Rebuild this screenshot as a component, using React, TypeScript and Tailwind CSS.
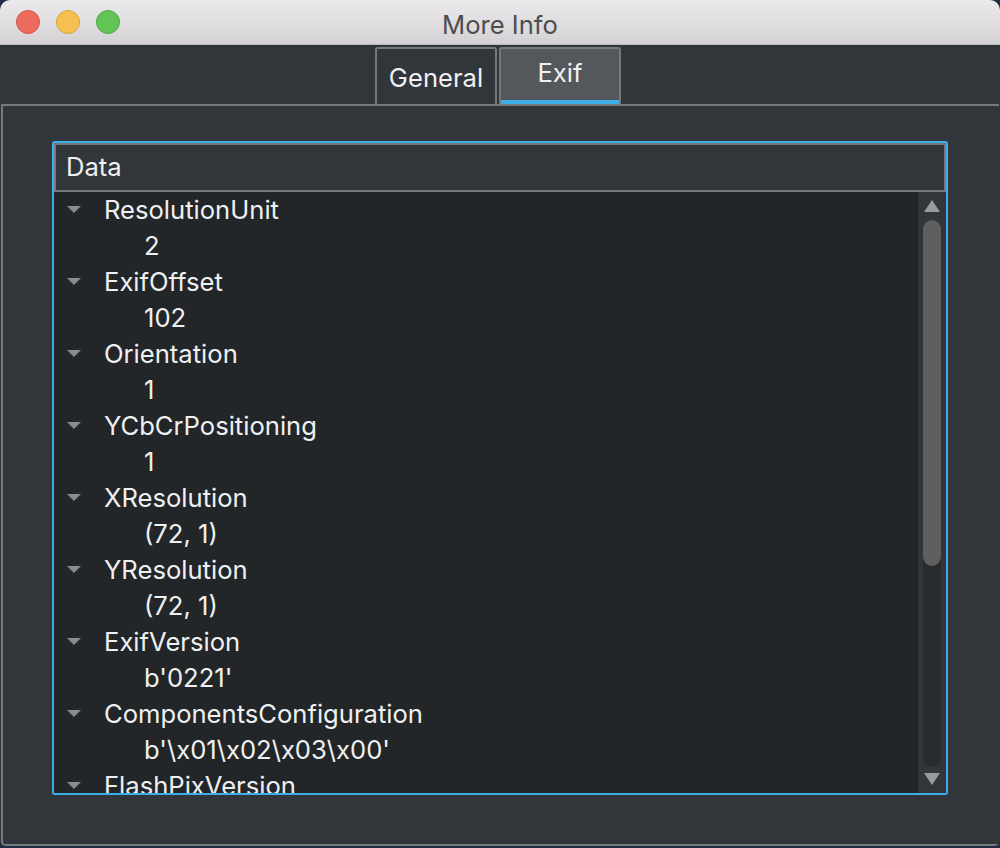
const rows: [string, string][] = [
  ['ResolutionUnit', '2'],
  ['ExifOffset', '102'],
  ['Orientation', '1'],
  ['YCbCrPositioning', '1'],
  ['XResolution', '(72, 1)'],
  ['YResolution', '(72, 1)'],
  ['ExifVersion', "b'0221'"],
  ['ComponentsConfiguration', "b'\\x01\\x02\\x03\\x00'"],
  ['FlashPixVersion', "b'0100'"],
];

function Arrow() {
  return (
    <svg width="14" height="8" viewBox="0 0 14 8" className="shrink-0">
      <polygon points="0,0 14,0 7,7" fill="#8a8c8e" />
    </svg>
  );
}

export default function App() {
  return (
    <div
      className="w-[1000px] h-[848px] bg-[#1e2c44] overflow-hidden"
      style={{ fontFamily: 'Inter, "Liberation Sans", sans-serif' }}
    >
      <div className="w-full h-[846px] bg-[#31363b] rounded-t-[10px] flex flex-col overflow-hidden rounded-b-[6px]">
        {/* title bar */}
        <div className="h-[45px] shrink-0 bg-gradient-to-b from-[#ebe9eb] to-[#d4d2d4] border-b border-[#b9b7b9] flex items-center relative">
          <div className="flex items-center gap-[16px] pl-[16px]">
            <span className="w-[24px] h-[24px] rounded-full bg-[#ed6a5e] border border-[#d6544a]" />
            <span className="w-[24px] h-[24px] rounded-full bg-[#f5c04f] border border-[#d9a33a]" />
            <span className="w-[24px] h-[24px] rounded-full bg-[#61c454] border border-[#4ea943]" />
          </div>
          <div className="absolute inset-0 flex items-center justify-center pt-[6px] text-[25.6px] text-[#4d4d4d]">
            More Info
          </div>
        </div>

        {/* tabs */}
        <div className="h-[59px] shrink-0 flex justify-center items-end pt-[2px] pr-[4px]">
          <div className="flex gap-[2px] h-[57px]">
            <div className="w-[122px] h-full border-2 border-b-0 border-[#76797c] rounded-t-[3px] bg-[#31363b] flex items-center justify-center pt-[4px] text-[25.6px] text-[#eff0f1]">
              General
            </div>
            <div className="w-[122px] h-full border-2 border-b-0 border-[#76797c] rounded-t-[3px] bg-[#54575b] flex flex-col">
              <div className="flex-1 flex items-center justify-center text-[25.6px] text-[#eff0f1] pb-[2px]">Exif</div>
              <div className="h-[4px] bg-[#3daee9]" />
            </div>
          </div>
        </div>

        {/* pane */}
        <div className="flex-1 mx-[1px] border-2 border-[#76797c] border-r-0 rounded-bl-[4px] pt-[35px] pl-[49px] pr-[51px]">
          <div className="h-[654px] border-2 border-[#3daee9] rounded-[3px] flex flex-col overflow-hidden">
            <div className="h-[49px] shrink-0 border-2 border-[#76797c] bg-[#31363b] flex items-center pl-[10px] text-[25.6px] text-[#eff0f1]">
              Data
            </div>
            <div className="flex-1 flex overflow-hidden bg-[#232629]">
              <div className="flex-1 overflow-hidden">
                {rows.map(([k, v]) => (
                  <div key={k}>
                    <div className="h-[36px] flex items-center text-[25.6px] text-[#eff0f1]">
                      <div className="w-[50px] pl-[13px] flex items-center">
                        <Arrow />
                      </div>
                      <span>{k}</span>
                    </div>
                    <div className="h-[36px] flex items-center pl-[90px] text-[25.6px] text-[#eff0f1]">{v}</div>
                  </div>
                ))}
              </div>
              <div className="w-[28px] shrink-0 bg-[#31363b] flex flex-col items-center pt-[8px] pb-[8px]">
                <svg width="16" height="12" viewBox="0 0 16 12">
                  <polygon points="8,0 16,12 0,12" fill="#9a9b9c" />
                </svg>
                <div className="flex-1 w-[18px] mt-[8px] mb-[6px] rounded-full bg-[#292a2b] flex flex-col">
                  <div className="h-[346px] rounded-full bg-[#5f5f5f]" />
                </div>
                <svg width="16" height="12" viewBox="0 0 16 12">
                  <polygon points="0,0 16,0 8,12" fill="#9a9b9c" />
                </svg>
              </div>
            </div>
          </div>
        </div>
      </div>
    </div>
  );
}
